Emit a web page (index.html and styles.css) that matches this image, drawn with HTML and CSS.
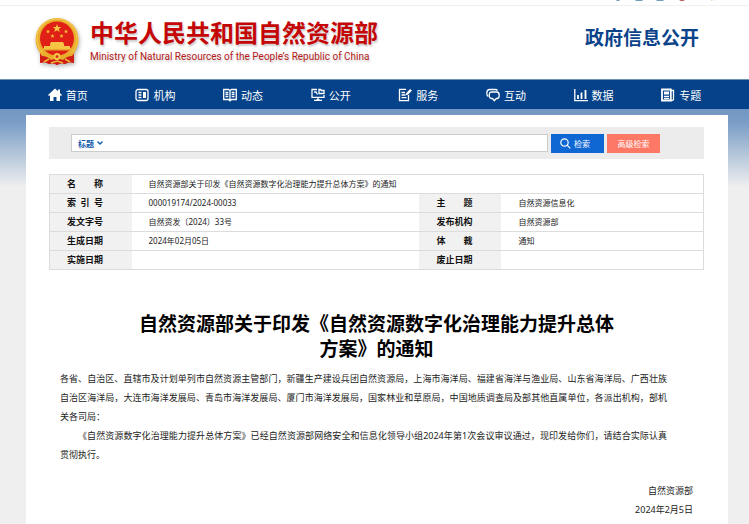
FILE: index.html
```html
<!DOCTYPE html>
<html lang="zh-CN">
<head>
<meta charset="utf-8">
<meta name="viewport" content="width=device-width, initial-scale=1">
<title>自然资源部</title>
<link rel="stylesheet" href="styles.css">
</head>
<body>
<div class="topbar">
  <svg class="tools" viewBox="0 0 100 2" width="100" height="2" aria-hidden="true">
    <path fill="#6fa0bb" d="M1 0h4l-1 1h-2zM20 0h8l-1 1h-6zM41 0h8l-1 1h-6z"/>
    <path fill="#c0545c" d="M64 0h6l-2 1h-2z"/>
    <path fill="#e9dcae" d="M96 0h1v1h-1zM98 0h1v1h-1z"/>
  </svg>
</div>
<header class="header">
  <a class="brand" href="#">
    <svg class="emblem" viewBox="0 0 44 48" width="44" height="48" aria-hidden="true">
      <path fill="#cf1d16" d="M5 32L5 45Q10 43 14 46Q18 44 22 47Q26 44 30 46Q34 43 39 45L39 32Z"/>
      <circle cx="22" cy="21.500" r="21.500" fill="#e9ac2c"/>
      <circle cx="22" cy="21" r="20" fill="none" stroke="#f3c348" stroke-width="1.500"/>
      <circle cx="22" cy="20.500" r="17" fill="#e01f17"/>
      <path fill="#f7c645" d="M22 6l1.100 3h3.200l-2.500 2 1 3.100-2.800-1.900-2.800 1.900 1-3.100-2.500-2h3.200z"/>
      <path fill="#f4bb38" d="M13 11.500l.6 1.200 1.400.1-1 1 .3 1.400-1.300-.7-1.300.7.3-1.400-1-1 1.400-.1zM31 11.500l.6 1.200 1.400.1-1 1 .3 1.400-1.300-.7-1.300.7.3-1.400-1-1 1.400-.1zM17.500 16l.6 1.200 1.400.1-1 1 .3 1.400-1.300-.7-1.300.7.3-1.400-1-1 1.400-.1zM26.500 16l.6 1.200 1.400.1-1 1 .3 1.400-1.300-.7-1.300.7.3-1.400-1-1 1.400-.1z"/>
      <path fill="#f6c544" d="M16 24h12l1 2v2h6v2l2 2H7l2-2v-2h6v-2z"/>
      <path fill="#e6aa2b" d="M8 31h28v1.500H8z"/>
      <path fill="#cf1d16" d="M5 36Q10 38 13 38L22 42L31 38Q34 38 39 36V45Q34 43 30 46Q26 44 22 47Q18 44 14 46Q10 43 5 45Z"/>
      <path fill="#e9ac2c" d="M4 34Q12 35 17 39L22 35L27 39Q32 35 40 34L37 38Q32 38 28 42L22 40L16 42Q12 38 7 38Z"/>
      <circle cx="22" cy="38.500" r="3.500" fill="#f5c646"/>
      <circle cx="22" cy="38.500" r="1.500" fill="#d8341c"/>
      <path fill="none" stroke="#edb333" stroke-width="1.500" d="M9 44L14 41M35 44L30 41M16 45L22 43L28 45"/>
    </svg>
    <span class="brand-text">
      <strong class="brand-cn">中华人民共和国自然资源部</strong>
      <span class="brand-en">Ministry of Natural Resources of the People’s Republic of China</span>
    </span>
  </a>
  <div class="section-name">政府信息公开</div>
</header>
<nav class="nav">
  <ul class="nav-list">
    <li><a href="#"><svg viewBox="0 0 14 14"><path class="f" d="M7 .5L0 7l1 1 1-.8V13h3.500V9h3v4H12V7.200l1 .8 1-1-2-1.900V1.500h-2v1.800z"/></svg>首页</a></li>
    <li><a href="#"><svg viewBox="0 0 14 14"><rect x="1" y="1.500" width="12" height="11" rx="2"/><path d="M3.500 4.500h3M3.500 7h3M3.500 9.500h3"/><path class="f" d="M8 4h3v6H8z"/></svg>机构</a></li>
    <li><a href="#"><svg viewBox="0 0 14 14"><path d="M.7 1.500H5.500L7 2.500 8.500 1.500h4.800v10H8.500L7 12.800 5.500 11.500H.7zM7 2.500v10M2.500 4.500h2.800M2.500 6.500h2.800M2.500 8.700h2.800M8.700 4.500h2.800M8.700 6.500h2.800M8.700 8.700h2.800"/></svg>动态</a></li>
    <li><a href="#"><svg viewBox="0 0 14 14"><path d="M6 1.500H1v7.800h12V7M7 9.300v2M3 12.300h8M3 4h2l1.500 2.500M8 1.500h1.500l.8 1H13v3H8z"/><path class="f" d="M5.500 11h3v2h-3z"/></svg>公开</a></li>
    <li><a href="#"><svg viewBox="0 0 14 14"><path d="M8 1.300H1.500v11.400h9V7M3.500 4.500h3.500M3.500 7h4M3.500 9.700h5"/><path class="f" d="M8 5.500L12 1l2 1.500-4 4.200-2.300.6z"/></svg>服务</a></li>
    <li><a href="#"><svg viewBox="0 0 14 14"><path d="M2.300 8.300C1 8 .8 7 .8 5.500c0-3 .7-4 3.200-4h5c1.200 0 2 .3 2.500 1M5.500 4h5.300c1.700 0 2.400 1 2.400 3.200S12.500 10.500 11 10.500h-.7L8.300 12.700 6.500 10.500h-1C4 10.500 3.300 9.500 3.300 7.200S4 4 5.500 4z"/></svg>互动</a></li>
    <li><a href="#"><svg viewBox="0 0 14 14"><path d="M.8 1v11.700H14" /><path class="bar" d="M4 11V7M7.500 11V4.500M11.500 11V2"/></svg>数据</a></li>
    <li><a href="#"><svg viewBox="0 0 14 14"><path class="bar" d="M1 1.500h8.800v11H1z"/><path d="M9.800 2.500h2.700v8.700c0 1-1 1.300-2.700 1.300M3 8.300h5M3 10.500h5"/><path class="f" d="M3 3.500h5v3H3z"/></svg>专题</a></li>
  </ul>
</nav>
<div class="backdrop">
  <main class="sheet">
    <form class="search">
      <div class="search-box">
        <select class="search-field" aria-label="检索范围"><option>标题</option></select>
        <svg class="chevron" viewBox="0 0 6 4" width="6" height="4" aria-hidden="true"><path d="M.5.500L3 3 5.500.500"/></svg>
        <input class="search-input" type="text" aria-label="检索词">
      </div>
      <button class="btn btn-primary" type="submit"><svg viewBox="0 0 11 11" width="11" height="11" aria-hidden="true"><circle cx="4.500" cy="4.500" r="3.700"/><path d="M7.200 7.200L10.300 10.300"/></svg>检索</button>
      <button class="btn btn-accent" type="button">高级检索</button>
    </form>
    <table class="meta">
      <colgroup><col class="c-label"><col class="c-main"><col class="c-label"><col class="c-side"></colgroup>
      <tr><th scope="row"><span class="label"><i>名</i><i>称</i></span></th><td colspan="3">自然资源部关于印发《自然资源数字化治理能力提升总体方案》的通知</td></tr>
      <tr><th scope="row"><span class="label"><i>索</i><i>引</i><i>号</i></span></th><td>000019174/2024-00033</td><th scope="row"><span class="label"><i>主</i><i>题</i></span></th><td>自然资源信息化</td></tr>
      <tr><th scope="row"><span class="label">发文字号</span></th><td>自然资发〔2024〕33号</td><th scope="row"><span class="label">发布机构</span></th><td>自然资源部</td></tr>
      <tr><th scope="row"><span class="label">生成日期</span></th><td>2024年02月05日</td><th scope="row"><span class="label"><i>体</i><i>裁</i></span></th><td>通知</td></tr>
      <tr><th scope="row"><span class="label">实施日期</span></th><td></td><th scope="row"><span class="label">废止日期</span></th><td></td></tr>
    </table>
    <article class="notice">
      <h1>自然资源部关于印发《自然资源数字化治理能力提升总体方案》的通知</h1>
      <div class="prose">
        <p>各省、自治区、直辖市及计划单列市自然资源主管部门，新疆生产建设兵团自然资源局，上海市海洋局、福建省海洋与渔业局、山东省海洋局、广西壮族自治区海洋局，大连市海洋发展局、青岛市海洋发展局、厦门市海洋发展局，国家林业和草原局，中国地质调查局及部其他直属单位，各派出机构，部机关各司局：</p>
        <p class="indent">《自然资源数字化治理能力提升总体方案》已经自然资源部网络安全和信息化领导小组2024年第1次会议审议通过，现印发给你们，请结合实际认真贯彻执行。</p>
      </div>
      <div class="signature">
        <p>自然资源部</p>
        <p>2024年2月5日</p>
      </div>
    </article>
  </main>
</div>
</body>
</html>
```
FILE: styles.css
```css
* { box-sizing: border-box; }

body {
  margin: 0;
  background: #fff;
  color: #222;
  font-family: "Noto Sans", "Noto Sans CJK SC", sans-serif;
  font-size: 9px;
}

a { color: inherit; text-decoration: none; }
p { margin: 0; }

.topbar {
  display: flex;
  justify-content: flex-end;
  height: 6px;
  padding-right: 34px;
  border-bottom: 1px solid #f0f0f0;
}

.header {
  display: flex;
  justify-content: space-between;
  align-items: flex-start;
  height: 73px;
  padding: 12px 50px 0 35px;
}

.brand { display: flex; gap: 11px; }

.emblem { filter: drop-shadow(1px 2px 2px rgba(0, 0, 0, .3)); }

.brand-text {
  display: flex;
  flex-direction: column;
  color: #c50606;
  text-shadow: 1px 2px 2px rgba(0, 0, 0, .2);
}

.brand-cn { font-size: 24px; line-height: 30px; }

.brand-en {
  color: #b41a1a;
  font-family: Roboto, "Noto Sans", sans-serif;
  font-size: 10px;
  line-height: 18px;
}

.section-name {
  margin-top: 7px;
  color: #0b438b;
  font-size: 19px;
  font-weight: 700;
  line-height: 26px;
}

.nav {
  padding: 0 24px;
  border-top: 1px solid #6a94b4;
  background: #054289;
}

.nav-list {
  display: grid;
  grid-template-columns: repeat(8, 1fr);
  margin: 0;
  padding: 0;
  list-style: none;
}

.nav a {
  display: flex;
  align-items: center;
  justify-content: center;
  gap: 4px;
  height: 29px;
  color: #fff;
  font-size: 11px;
}

.nav svg {
  width: 14px;
  height: 14px;
  fill: none;
  stroke: #fff;
  stroke-width: 1.3;
}

.nav .f { fill: #fff; stroke: none; }
.nav .bar { stroke-width: 1.8; }

.backdrop {
  padding: 6px 21px 0 26px;
  background: #efefef linear-gradient(#7096c2, #7b9ec7 14px, #efefef 78px) no-repeat;
}

.sheet {
  padding: 12px 24px 6px 23px;
  background: #fff;
}

.search {
  display: flex;
  align-items: center;
  height: 32px;
  padding: 0 44px 0 22px;
  background: #ececec;
}

.search-box {
  display: flex;
  flex: 1;
  align-items: center;
  height: 18px;
  margin-right: 3px;
  padding-left: 6px;
  border: 1px solid #ccc;
  background: #fff;
}

.search-field {
  appearance: none;
  padding: 0;
  border: 0;
  background: none;
  color: #0d5ba8;
  font: 700 8px "Noto Sans CJK SC", sans-serif;
}

.chevron { margin-left: 3px; fill: none; stroke: #0d5ba8; stroke-width: 1.3; }

.search-input {
  flex: 1;
  min-width: 0;
  height: 14px;
  border: 0;
  outline: 0;
  font: inherit;
}

.btn {
  display: flex;
  align-items: center;
  justify-content: center;
  gap: 3px;
  width: 53px;
  height: 19px;
  padding: 0 5px 0 0;
  border: 0;
  color: #fff;
  font: 8px "Noto Sans CJK SC", sans-serif;
}

.btn svg { fill: none; stroke: #fff; stroke-width: 1.2; }
.btn-primary { background: #0e67d3; }
.btn-accent { margin-left: 3px; padding: 0; background: #fd7865; }

.meta {
  width: 100%;
  margin-top: 15px;
  border: 1px solid #dcdcdc;
  border-collapse: collapse;
  table-layout: fixed;
  font-size: 8px;
  line-height: 12px;
}

.c-label { width: 82px; }
.c-side { width: 202px; }
.meta tr { height: 19px; border-bottom: 1px solid #dcdcdc; }
.meta th, .meta td { padding: 0 17px; text-align: left; }
.meta th { background: #f1f1f1; color: #111; font-size: 9px; }

.label { display: flex; justify-content: space-between; width: 36px; }
.label i { font-style: normal; }

.notice { padding: 42px 11px 0; }

.notice h1 {
  max-width: 475px;
  margin: 0 auto;
  color: #000;
  font-size: 19px;
  line-height: 25px;
  text-align: center;
}

.prose {
  max-width: 607px;
  margin-top: 7px;
  line-height: 19px;
  text-align: justify;
}

.indent { text-indent: 2em; }

.signature {
  margin-top: 17px;
  line-height: 19px;
  text-align: right;
}
```
